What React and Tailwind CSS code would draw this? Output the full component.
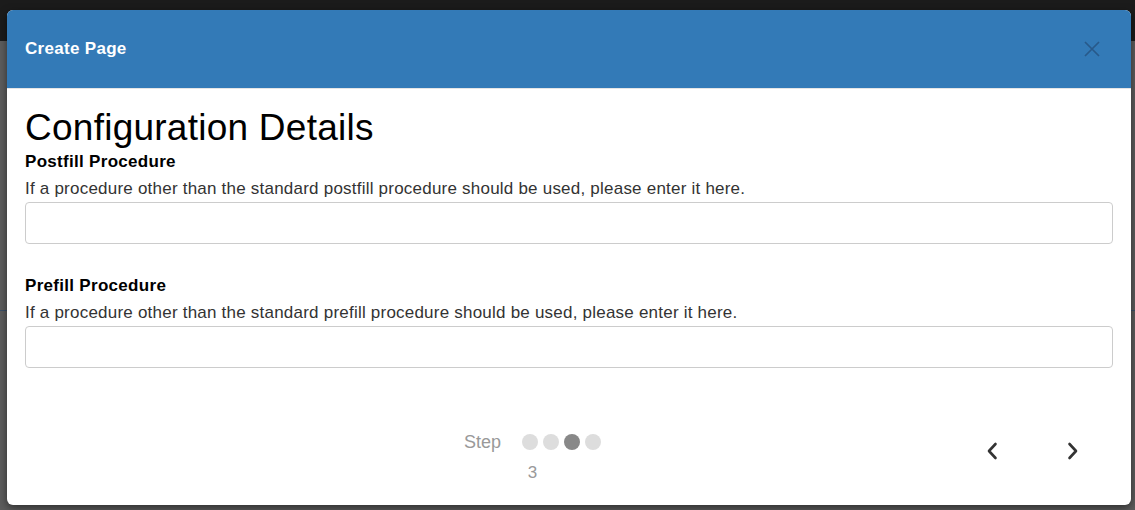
import { useState } from "react";

const Field = ({ label, help }) => {
  const [value, setValue] = useState("");
  return (
    <div className="mb-[15px]">
      <label className="block text-[17px] font-bold leading-[22px] tracking-[0.3px] text-black">
        {label}
      </label>
      <p className="text-[17px] leading-[22px] tracking-[0.22px] text-[#333] mt-[5px] mb-[2px]">{help}</p>
      <input
        value={value}
        onChange={(e) => setValue(e.target.value)}
        className="block w-full h-[42px] rounded-[4px] border border-[#ccc] px-3 outline-none"
      />
    </div>
  );
};

const App = () => {
  return (
    <div
      className="relative h-[510px] w-[1135px] overflow-hidden bg-[#5d5d5d]"
      style={{ fontFamily: '"Liberation Sans", Arial, sans-serif' }}
    >
      <div className="h-[41px] bg-[#1b1b1b]" />
      <div className="h-[270px] border-b border-[#3b5068]" />

      {/* modal */}
      <div className="absolute left-[7px] top-[10px] w-[1124px] h-[495px] rounded-[6px] bg-white shadow-[0_3px_9px_rgba(0,0,0,0.5)] flex flex-col overflow-hidden">
        <div className="h-[79px] shrink-0 bg-[#337ab7] border-b border-[#e5e5e5] flex items-center justify-between pl-[18px] pr-[31px]">
          <h4 className="text-[17px] font-bold tracking-[0.3px] text-white">Create Page</h4>
          <button className="text-[#28598a]">
            <svg width="16" height="16" viewBox="0 0 16 16" fill="none" stroke="currentColor" strokeWidth="1.7">
              <path d="M1 1 L15 15 M15 1 L1 15" />
            </svg>
          </button>
        </div>

        <div className="px-[18px] pt-[19px] flex-1">
          <h1 className="text-[37px] leading-[40px] tracking-[0.25px] text-black">Configuration Details</h1>
          <div className="mt-[3px]">
            <Field
              label="Postfill Procedure"
              help="If a procedure other than the standard postfill procedure should be used, please enter it here."
            />
            <div className="h-[16px]" />
            <Field
              label="Prefill Procedure"
              help="If a procedure other than the standard prefill procedure should be used, please enter it here."
            />
          </div>
        </div>

        <div className="h-[100px] shrink-0 flex items-start">
          <div className="ml-[457px] pt-[27px] flex flex-col items-center">
            <div className="flex items-center">
              <span className="text-[18px] leading-[20px] text-[#999]">Step</span>
              <div className="ml-[21px] flex gap-[5px]">
                <span className="w-[16px] h-[16px] rounded-full bg-[#ddd]" />
                <span className="w-[16px] h-[16px] rounded-full bg-[#ddd]" />
                <span className="w-[16px] h-[16px] rounded-full bg-[#888]" />
                <span className="w-[16px] h-[16px] rounded-full bg-[#ddd]" />
              </div>
            </div>
            <span className="mt-[11px] text-[17px] leading-[20px] text-[#999]">3</span>
          </div>
          <div className="ml-auto mr-[52px] pt-[37px] flex gap-[69px]">
            <button className="text-[#333]">
              <svg width="12" height="18" viewBox="0 0 12 18" fill="none" stroke="currentColor" strokeWidth="2.6" strokeLinecap="round" strokeLinejoin="round">
                <path d="M9.5 2 L3 9 L9.5 16" />
              </svg>
            </button>
            <button className="text-[#333]">
              <svg width="12" height="18" viewBox="0 0 12 18" fill="none" stroke="currentColor" strokeWidth="2.6" strokeLinecap="round" strokeLinejoin="round">
                <path d="M2.5 2 L9 9 L2.5 16" />
              </svg>
            </button>
          </div>
        </div>
      </div>
    </div>
  );
};

export default App;
